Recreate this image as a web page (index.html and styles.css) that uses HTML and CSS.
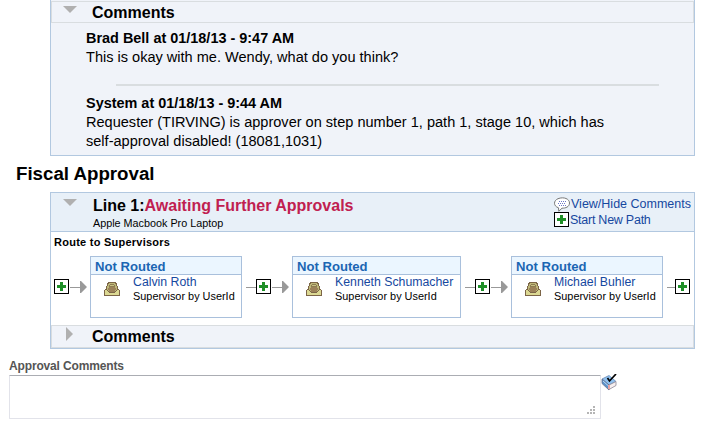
FILE: index.html
```html
<!DOCTYPE html>
<html>
<head>
  <meta charset="UTF-8">
  <title>Fiscal Approval</title>
  <link rel="stylesheet" href="styles.css">
</head>
<body>
  <!-- shared icons -->
  <svg class="defs" width="0" height="0">
    <symbol id="plus" viewBox="0 0 15 15">
      <rect x="0.5" y="0.5" width="14" height="14" fill="#fff" stroke="#000"/>
      <path d="M6 3h3v3h3v3h-3v3h-3v-3h-3v-3h3z" fill="#1f8f28"/>
    </symbol>
    <symbol id="arrow" viewBox="0 0 17 12">
      <path d="M0 6h11v1h-11zM10 0h1l6 6l-6 6h-1z" fill="#999"/>
    </symbol>
    <symbol id="tray" viewBox="0 0 16 14">
      <path d="M4 0h8v1h1v3h1v3h1v1h1v6h-16v-6h1v-1h1v-3h1v-3h1z" fill="#7c6547"/>
      <path d="M1 8h2v1h1v1h1v1h6v-1h1v-1h1v-1h2v5h-14z" fill="#dbd892"/>
      <path d="M5 1h6v1h1v2h1v4h-1v1h-1v1h-6v-1h-1v-1h-1v-4h1v-2h1z" fill="#bdb778"/>
      <path d="M5 3h1v-1h4v1h1v2h-6z" fill="#8d7c52"/>
      <path d="M6 3h4v1h-4z" fill="#c8c282"/>
      <path d="M5 5h6v1h1v2h-1v2h-6v-2h-1v-2h1z" fill="#9c8259"/>
    </symbol>
  </svg>

  <div class="panel history">
    <div class="bar">
      <span class="toggle down"></span>
      <h3>Comments</h3>
    </div>
    <div class="comments">
      <div class="comment">
        <b>Brad Bell at 01/18/13 - 9:47 AM</b>
        <p>This is okay with me. Wendy, what do you think?</p>
      </div>
      <div class="separator"></div>
      <div class="comment">
        <b>System at 01/18/13 - 9:44 AM</b>
        <p>Requester (TIRVING) is approver on step number 1, path 1, stage 10, which has<br>self-approval disabled! (18081,1031)</p>
      </div>
    </div>
  </div>

  <h2>Fiscal Approval</h2>

  <div class="panel line">
    <div class="line-header">
      <span class="toggle down"></span>
      <div class="line-title">
        <h3>Line 1:<span class="status">Awaiting Further Approvals</span></h3>
        <small>Apple Macbook Pro Laptop</small>
      </div>
      <div class="actions">
        <a>
          <svg width="16" height="15" viewBox="0 0 16 15">
            <path d="M4.500 10.800C-1 9-.5 3.500 4 1.700C10-.6 15.500 2 15.500 6C15.500 9.800 11.500 11.300 8 11.200L4.800 14.300z" fill="#fff" stroke="#777"/>
            <path d="M5 4.500h7M4 6.500h8M5 8.500h7" stroke="#6d78c8" stroke-dasharray="1 1"/>
          </svg>View/Hide Comments</a>
        <a><svg width="15" height="15"><use href="#plus"/></svg><span class="new-path">Start New Path</span></a>
      </div>
    </div>

    <div class="route-title">Route to Supervisors</div>
    <div class="route">
      <svg class="plus" width="15" height="15"><use href="#plus"/></svg>
      <svg class="arrow" width="17" height="12"><use href="#arrow"/></svg>
      <div class="step">
        <div class="step-status">Not Routed</div>
        <div class="step-body">
          <svg width="16" height="14"><use href="#tray"/></svg>
          <div><a>Calvin Roth</a><small>Supervisor by UserId</small></div>
        </div>
      </div>
      <span class="dash"></span>
      <svg class="plus" width="15" height="15"><use href="#plus"/></svg>
      <svg class="arrow" width="17" height="12"><use href="#arrow"/></svg>
      <div class="step wide">
        <div class="step-status">Not Routed</div>
        <div class="step-body">
          <svg width="16" height="14"><use href="#tray"/></svg>
          <div><a>Kenneth Schumacher</a><small>Supervisor by UserId</small></div>
        </div>
      </div>
      <span class="dash"></span>
      <svg class="plus" width="15" height="15"><use href="#plus"/></svg>
      <svg class="arrow" width="17" height="12"><use href="#arrow"/></svg>
      <div class="step">
        <div class="step-status">Not Routed</div>
        <div class="step-body">
          <svg width="16" height="14"><use href="#tray"/></svg>
          <div><a>Michael Buhler</a><small>Supervisor by UserId</small></div>
        </div>
      </div>
      <span class="dash last"></span>
      <svg class="plus" width="15" height="15"><use href="#plus"/></svg>
    </div>

    <div class="bar">
      <span class="toggle right"></span>
      <h3>Comments</h3>
    </div>
  </div>

  <div class="approval">
    <label for="approval-comments">Approval Comments</label>
    <div class="approval-field">
      <div class="input-wrap">
        <textarea id="approval-comments"></textarea>
        <svg class="grip" width="8" height="8" fill="#b5b5b5">
          <path d="M6 0h2v2h-2zM3 3h2v2h-2zM6 3h2v2h-2zM0 6h2v2h-2zM3 6h2v2h-2zM6 6h2v2h-2z"/>
        </svg>
      </div>
      <!-- spell check -->
      <svg class="spell" width="17" height="17" viewBox="0 0 17 17">
        <path d="M1 5l7-3.500l7 6l-7 3.500z" fill="#8fc0ee" stroke="#6688b5" stroke-width=".8"/>
        <path d="M1 5l7 6v5l-7-6.500z" fill="#5c92cb" stroke="#66708c" stroke-width=".8"/>
        <path d="M8 11l7-3.500v4l-7 4z" fill="#f6efef" stroke="#8b8795" stroke-width=".8"/>
        <path d="M7 11h2v4h-2z" fill="#e9a5a5"/>
        <path d="M2 7l5 4.500" stroke="#b8dcf8"/>
        <path d="M6.500 4l2 3l6.500-7" fill="none" stroke="#000" stroke-width="1.700"/>
      </svg>
    </div>
  </div>
</body>
</html>
```
FILE: styles.css
```css
body {
  margin: 0;
  background-color: #fff;
  color: #000;
  font-family: "Liberation Sans", Arial, sans-serif;
}
h2, h3, p {
  margin: 0;
}
svg {
  display: block;
  flex: none;
}
.defs {
  position: absolute;
}
a {
  color: #1648a0;
}
small {
  display: block;
  font-size: 10.8px;
  line-height: 14px;
}
.panel {
  box-sizing: border-box;
  width: 645px;
  margin-left: 50px;
  border: 1px solid #b2c8e0;
}
.history {
  height: 156px;
  padding-top: 1px;
  border-top: 0;
  background-color: #f0f3f9;
}
.bar {
  box-sizing: border-box;
  display: flex;
  height: 22px;
  border: 1px solid #d9dde0;
  background-color: #f0f3f9;
}
.bar h3, .line-title h3 {
  font-size: 16px;
  line-height: 22px;
}
.bar h3 {
  margin-left: 15px;
}
.toggle {
  flex: none;
  width: 0;
  height: 0;
}
.toggle.down {
  margin: 4px 0 0 11px;
  border-left: 7px solid transparent;
  border-right: 7px solid transparent;
  border-top: 7px solid #b0b0b0;
}
.toggle.right {
  margin: 1px 4px 0 14px;
  border-top: 7px solid transparent;
  border-bottom: 7px solid transparent;
  border-left: 7px solid #b0b0b0;
}
.comments {
  padding: 6px 0 0 35px;
}
.comment {
  font-size: 14.55px;
  line-height: 19px;
}
.comment b {
  font-size: 14.45px;
}
.separator {
  width: 543px;
  height: 2px;
  margin: 17px 0 8px 30px;
  background-color: #d9dde0;
}
h2 {
  margin: 7px 0 7px 16px;
  font-size: 18.7px;
  line-height: 22px;
}
.line-header {
  display: flex;
  height: 38px;
  border-bottom: 1px solid #b2c8e0;
  background-color: #e8f0f8;
}
.line-header .toggle {
  margin: 6px 0 0 12px;
}
.line-title {
  margin: 2px 0 0 16px;
}
.line-title small {
  line-height: 12px;
}
.status {
  color: #c02050;
}
.actions {
  width: 140px;
  margin: 4px 0 0 auto;
  font-size: 12.5px;
  line-height: 15px;
  white-space: nowrap;
}
.actions a {
  display: flex;
  gap: 1px;
}
.new-path {
  line-height: 17px;
  letter-spacing: -0.25px;
}
.route-title {
  margin: 3px 0 0 3px;
  font-size: 11px;
  font-weight: bold;
  line-height: 14px;
  letter-spacing: 0.25px;
}
.route {
  display: flex;
  height: 69px;
  margin: 7px 0 0 3px;
}
.plus {
  margin-top: 23px;
}
.arrow {
  margin: 25px 3px 0 1px;
}
.dash {
  flex: none;
  width: 10px;
  height: 1px;
  margin: 31px 0 0 4px;
  background-color: #999;
}
.dash.last {
  width: 8px;
}
.step {
  box-sizing: border-box;
  flex: none;
  width: 152px;
  height: 62px;
  border: 1px solid #a9c0dc;
}
.step.wide {
  width: 169px;
}
.step-status {
  height: 17px;
  padding-left: 4px;
  border-bottom: 1px solid #a9c0dc;
  background-color: #ebf6ff;
  color: #1b66b3;
  font-size: 13.1px;
  font-weight: bold;
  line-height: 19px;
}
.step-body {
  display: flex;
  gap: 13px;
  padding-left: 13px;
  font-size: 12.3px;
  line-height: 14px;
  white-space: nowrap;
}
.step-body svg {
  margin-top: 7px;
}
.step-body a {
  display: block;
}
.step-body small {
  font-size: 10.9px;
}
.line .bar {
  height: 23px;
}
.approval {
  margin: 9px 0 0 9px;
}
.approval label {
  display: block;
  color: #555;
  font-size: 12px;
  font-weight: bold;
  line-height: 16px;
  letter-spacing: -0.15px;
}
.approval-field {
  display: flex;
  margin-top: 1px;
}
.spell {
  margin-top: -1px;
}
.input-wrap {
  position: relative;
}
textarea {
  box-sizing: border-box;
  display: block;
  width: 592px;
  height: 44px;
  border: 1px solid #e2e3ea;
  border-top-color: #abadb3;
  border-radius: 1px;
  resize: none;
}
.grip {
  position: absolute;
  right: 6px;
  bottom: 5px;
}
```
